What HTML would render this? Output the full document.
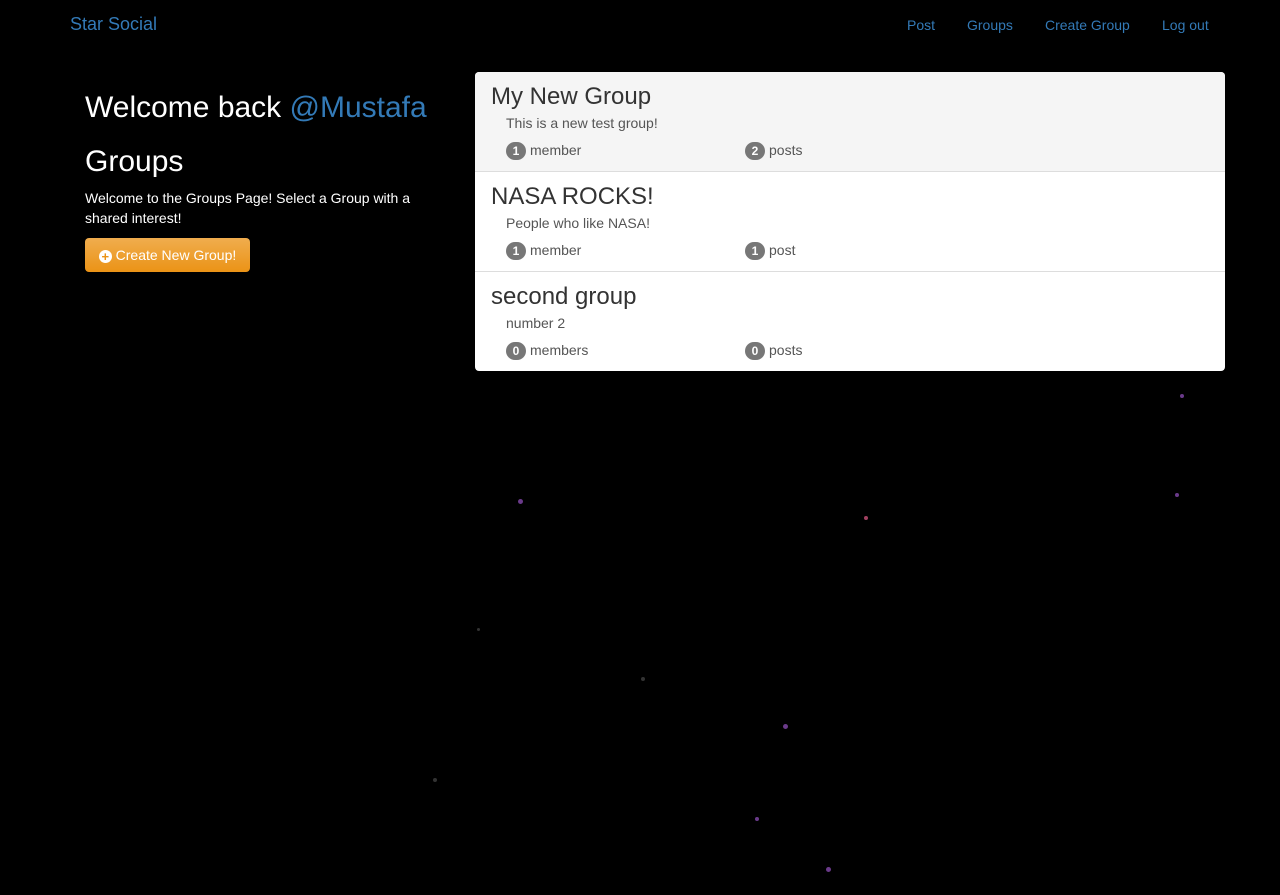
<!DOCTYPE html>
<html><head><meta charset="utf-8"><style>
body{margin:0;background:#000;width:1280px;height:895px;overflow:hidden;position:relative;font-family:"Liberation Sans",Arial,sans-serif;}
.a{position:absolute;white-space:nowrap}
.nav{color:#337ab7;font-size:14px;top:17px}
.badge{display:inline-block;background:#777;color:#fff;border-radius:10px;font-size:12px;font-weight:bold;width:20px;height:18px;text-align:center;line-height:18px;vertical-align:middle;margin-right:4px}
.panel{position:absolute;left:475px;top:72px;width:750px;height:299px;background:#fff;border-radius:4px;overflow:hidden}
.item{position:absolute;left:0;width:750px;height:99px;border-bottom:1px solid #ddd;color:#333}
.item h3{position:absolute;left:16px;top:11px;margin:0;font-size:24px;font-weight:normal}
.item .d{position:absolute;left:31px;top:43px;font-size:14px;color:#555}
.item .m{position:absolute;left:31px;top:70px;font-size:14px;color:#555}
.item .p{position:absolute;left:270px;top:70px;font-size:14px;color:#555}
.dot{position:absolute;border-radius:50%;background:#6a3a8a}
</style></head><body>
<div class="a" style="left:70px;top:14px;font-size:18px;color:#337ab7">Star Social</div>
<div class="a nav" style="left:907px">Post</div>
<div class="a nav" style="left:967px">Groups</div>
<div class="a nav" style="left:1045px">Create Group</div>
<div class="a nav" style="left:1162px">Log out</div>
<div class="a" style="left:85px;top:91px;font-size:30px;color:#fff">Welcome back <span style="color:#337ab7">@Mustafa</span></div>
<div class="a" style="left:85px;top:145px;font-size:30px;color:#fff">Groups</div>
<div class="a" style="left:85px;top:188px;font-size:14px;color:#fff;line-height:20px;white-space:normal;width:345px">Welcome to the Groups Page! Select a Group with a shared interest!</div>
<div class="a" style="left:85px;top:238px;width:165px;height:34px;background:linear-gradient(#f0ad4e,#eb9316);border-radius:4px;color:#fff;font-size:14px;line-height:34px;text-align:center"><span style="display:inline-block;width:13px;height:13px;border-radius:50%;background:#fff;color:#eb9316;font-size:13px;line-height:13px;font-weight:bold;vertical-align:-1px">+</span> Create New Group!</div>
<div class="panel">
<div class="item" style="top:0;background:#f5f5f5"><h3>My New Group</h3><div class="d">This is a new test group!</div><div class="m"><span class="badge">1</span>member</div><div class="p"><span class="badge">2</span>posts</div></div>
<div class="item" style="top:100px"><h3>NASA ROCKS!</h3><div class="d">People who like NASA!</div><div class="m"><span class="badge">1</span>member</div><div class="p"><span class="badge">1</span>post</div></div>
<div class="item" style="top:200px;border:none"><h3>second group</h3><div class="d">number 2</div><div class="m"><span class="badge">0</span>members</div><div class="p"><span class="badge">0</span>posts</div></div>
</div>
<div class="dot" style="left:1180px;top:394px;width:4px;height:4px"></div>
<div class="dot" style="left:518px;top:499px;width:5px;height:5px"></div>
<div class="dot" style="left:1175px;top:493px;width:4px;height:4px"></div>
<div class="dot" style="left:864px;top:516px;width:4px;height:4px;background:#a04060"></div>
<div class="dot" style="left:783px;top:724px;width:5px;height:5px"></div>
<div class="dot" style="left:755px;top:817px;width:4px;height:4px"></div>
<div class="dot" style="left:826px;top:867px;width:5px;height:5px"></div>
<div class="dot" style="left:641px;top:677px;width:4px;height:4px;background:#333"></div>
<div class="dot" style="left:477px;top:628px;width:3px;height:3px;background:#333"></div>
<div class="dot" style="left:433px;top:778px;width:4px;height:4px;background:#333"></div>
</body></html>
